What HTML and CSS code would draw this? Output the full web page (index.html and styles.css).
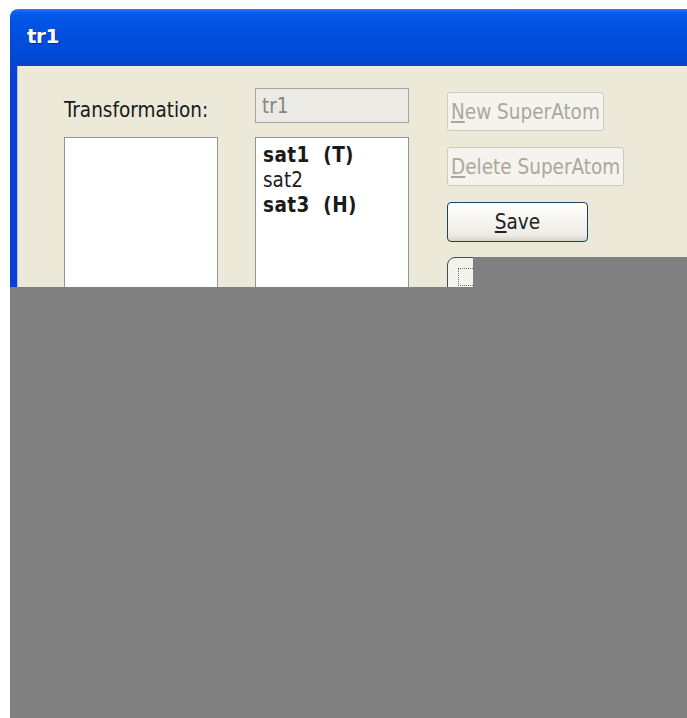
FILE: index.html
```html
<!DOCTYPE html>
<html>
<head>
<meta charset="utf-8">
<title>tr1</title>
<link rel="stylesheet" href="styles.css">
</head>
<body>
<div class="window">
  <div class="titlebar"><span class="title">tr1</span></div>
  <div class="client">
    <div class="form">
      <div class="label">Transformation:</div>
      <div class="textfield">tr1</div>
      <div class="buttons">
        <div class="btn disabled"><u>N</u>ew SuperAtom</div>
        <div class="btn disabled"><u>D</u>elete SuperAtom</div>
        <div class="btn save"><u>S</u>ave</div>
        <div class="btn partial"></div>
      </div>
      <div class="listbox"></div>
      <div class="listbox items">
        <div class="item strong">sat1&nbsp; (T)</div>
        <div class="item">sat2</div>
        <div class="item strong">sat3&nbsp; (H)</div>
      </div>
    </div>
  </div>
</div>
<div class="cover cover-main"></div>
<div class="cover cover-notch"></div>
</body>
</html>
```

FILE: styles.css
```css
html, body {
  margin: 0;
  padding: 0;
  background: #ffffff;
  width: 687px;
  height: 718px;
  overflow: hidden;
  position: relative;
  font-family: "DejaVu Sans Condensed", "DejaVu Sans", sans-serif;
  font-stretch: condensed;
}

.window {
  margin: 9px 0 0 10px;
  width: 677px;
  height: 709px;
  display: flex;
  flex-direction: column;
  overflow: hidden;
}

.titlebar {
  flex: 0 0 57px;
  height: 57px;
  border-radius: 8px 0 0 0;
  background: linear-gradient(to bottom,
    #3a7af2 0px, #0d5deb 3px, #0257e6 8px,
    #0050de 25px, #004ad6 45px, #0046cf 52px, #0a47c4 57px);
  display: flex;
  align-items: center;
  padding-left: 17px;
  box-sizing: border-box;
}

.title {
  color: #ffffff;
  font-family: "DejaVu Sans", sans-serif;
  font-stretch: normal;
  font-weight: bold;
  font-size: 20px;
  letter-spacing: -0.5px;
  text-shadow: 1px 1px 0 #0a2a8a;
  margin-top: -4px;
}

.client {
  flex: 1 1 auto;
  min-height: 0;
  overflow: hidden;
  background: #ece9d8;
  border-left: 7px solid #0a40d4;
  box-shadow: inset 1px 0 0 #a9c3f0;
  padding: 22px 0 0 47px;
}

.form {
  display: grid;
  grid-template-columns: 154px 154px auto;
  grid-template-rows: 35px 600px;
  column-gap: 37px;
  row-gap: 14px;
  font-size: 20.5px;
  color: #1a1a1a;
}

.label {
  grid-column: 1;
  grid-row: 1;
  align-self: center;
  padding-top: 8px;
  white-space: nowrap;
}

.textfield {
  grid-column: 2;
  grid-row: 1;
  box-sizing: border-box;
  border: 1px solid #a2a6aa;
  background: #ebeae4;
  color: #858585;
  padding: 0 0 0 6px;
  display: flex;
  align-items: center;
}

.buttons {
  grid-column: 3;
  grid-row: 1 / span 2;
  margin-left: 1px;
  padding-top: 4px;
  display: flex;
  flex-direction: column;
  align-items: flex-start;
  gap: 16px;
}

.btn {
  box-sizing: border-box;
  height: 39px;
  border-radius: 3px;
  padding: 0 3px;
  display: flex;
  align-items: center;
  justify-content: center;
  white-space: nowrap;
}

.btn u {
  text-underline-offset: 2px;
}

.disabled {
  border: 1px solid #cdcabb;
  background: #f4f3ee;
  color: #aca899;
}

.save {
  width: 141px;
  height: 40px;
  border: 1px solid #1c3f6a;
  border-radius: 4px;
  background: linear-gradient(to bottom, #ffffff 0%, #f6f5f1 45%, #ecebe4 85%, #d8d3c8 100%);
  color: #222222;
}

.partial {
  width: 141px;
  height: 40px;
  margin-top: -1px;
  border: 1px solid #3b4c5e;
  border-radius: 8px 3px 3px 3px;
  background: linear-gradient(to bottom, #f2f1ea 0%, #f6f5ef 100%);
  outline: 1px dotted #6c6c6c;
  outline-offset: -12px;
}

.listbox {
  grid-row: 2;
  box-sizing: border-box;
  border: 1px solid #8e959b;
  border-bottom: 0;
  background: #ffffff;
}

.items {
  grid-column: 2;
  padding: 5px 0 0 7px;
}

.item {
  line-height: 25px;
  height: 25px;
  white-space: nowrap;
  color: #1a1a1a;
}

.strong {
  font-weight: bold;
  letter-spacing: 0.4px;
}

.cover {
  position: absolute;
  background: #808080;
}

.cover-main {
  left: 10px;
  top: 287px;
  right: 0;
  bottom: 0;
}

.cover-notch {
  left: 473px;
  top: 257px;
  right: 0;
  height: 30px;
}
```
